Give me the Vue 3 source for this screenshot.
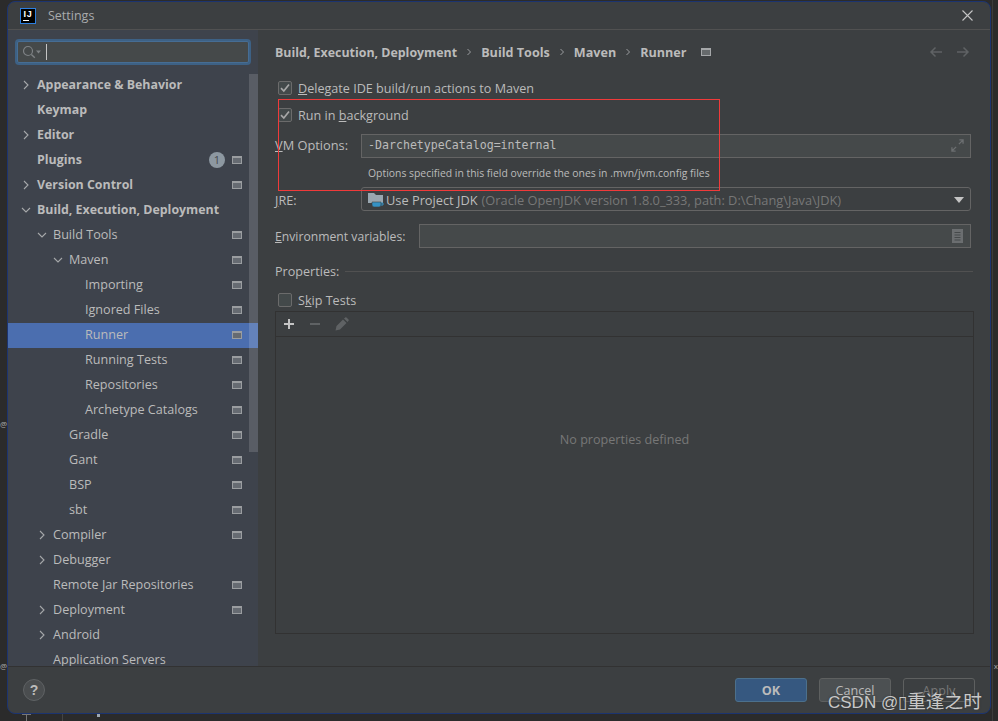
<script setup>
const tree = [
  { label: 'Appearance & Behavior', level: 0, bold: true, arrow: 'right' },
  { label: 'Keymap', level: 0, bold: true },
  { label: 'Editor', level: 0, bold: true, arrow: 'right' },
  { label: 'Plugins', level: 0, bold: true, badge: '1', gear: true },
  { label: 'Version Control', level: 0, bold: true, arrow: 'right', gear: true },
  { label: 'Build, Execution, Deployment', level: 0, bold: true, arrow: 'down' },
  { label: 'Build Tools', level: 1, arrow: 'down', gear: true },
  { label: 'Maven', level: 2, arrow: 'down', gear: true },
  { label: 'Importing', level: 3, gear: true },
  { label: 'Ignored Files', level: 3, gear: true },
  { label: 'Runner', level: 3, gear: true, selected: true },
  { label: 'Running Tests', level: 3, gear: true },
  { label: 'Repositories', level: 3, gear: true },
  { label: 'Archetype Catalogs', level: 3, gear: true },
  { label: 'Gradle', level: 2, gear: true },
  { label: 'Gant', level: 2, gear: true },
  { label: 'BSP', level: 2, gear: true },
  { label: 'sbt', level: 2, gear: true },
  { label: 'Compiler', level: 1, arrow: 'right', gear: true },
  { label: 'Debugger', level: 1, arrow: 'right' },
  { label: 'Remote Jar Repositories', level: 1, gear: true },
  { label: 'Deployment', level: 1, arrow: 'right', gear: true },
  { label: 'Android', level: 1, arrow: 'right' },
  { label: 'Application Servers', level: 1 }
]
const crumbs = ['Build Tools', 'Maven', 'Runner']
</script>

<template>
  <div class="desktop">
    <div class="dialog">
      <header class="titlebar">
        <div class="logo"><span class="logo-text">IJ</span><span class="logo-bar"></span></div>
        <span class="title">Settings</span>
        <svg class="close" viewBox="0 0 11 11" width="11" height="11">
          <path d="M.5.500l10 10M10.500.500l-10 10" stroke="#c4c4c4" stroke-width="1.100" fill="none" />
        </svg>
      </header>

      <div class="body">
        <aside class="sidebar">
          <div class="search">
            <svg viewBox="0 0 20 14" width="20" height="14">
              <circle cx="6" cy="6" r="4.500" fill="none" stroke="#7d8184" stroke-width="1.200" />
              <path d="M9.400 9.400l3.400 3.400" stroke="#7d8184" stroke-width="1.400" />
              <path d="M14 5.500h5l-2.500 3z" fill="#7d8184" />
            </svg>
            <span class="caret"></span>
          </div>
          <div class="tree">
            <div v-for="item in tree" :key="item.label" class="row" :class="{ selected: item.selected, bold: item.bold }"
              :style="{ paddingLeft: 13 + item.level * 16 + 'px' }">
              <span class="arrow">
                <svg v-if="item.arrow === 'right'" viewBox="0 0 10 10" width="10" height="10">
                  <path d="M3 1l4 4-4 4" fill="none" stroke="#a5a7a9" stroke-width="1.100" />
                </svg>
                <svg v-if="item.arrow === 'down'" viewBox="0 0 10 10" width="10" height="10">
                  <path d="M1 3l4 4 4-4" fill="none" stroke="#a5a7a9" stroke-width="1.100" />
                </svg>
              </span>
              <span class="row-label">{{ item.label }}</span>
              <span v-if="item.badge" class="badge">{{ item.badge }}</span>
              <svg v-if="item.gear" class="gear" viewBox="0 0 10 8" width="10" height="8">
                <rect x="0.500" y="0.500" width="9" height="7" fill="#666b72" stroke="#9a9da0" />
                <path d="M1 1.500h8" stroke="#9a9da0" />
              </svg>
            </div>
            <div class="scrollbar"></div>
          </div>
        </aside>

        <main class="panel">
          <div class="crumbs">
            <span>Build, Execution, Deployment</span>
            <template v-for="c in crumbs" :key="c">
              <svg viewBox="0 0 6 8" width="6" height="8"><path d="M1.500 1l3 3-3 3" fill="none" stroke="#9a9da0" /></svg>
              <span class="crumb">{{ c }}</span>
            </template>
            <svg class="crumb-gear" viewBox="0 0 10 8" width="10" height="8">
              <rect x="0.500" y="0.500" width="9" height="7" fill="#666a6c" stroke="#a5a7a9" />
              <path d="M1 1.500h8" stroke="#a5a7a9" />
            </svg>
            <div class="nav">
              <svg viewBox="0 0 14 12" width="14" height="12"><path d="M13 6H2M6.500 1.500L2 6l4.500 4.500" fill="none" stroke="#5f6264" stroke-width="1.500" /></svg>
              <svg viewBox="0 0 14 12" width="14" height="12"><path d="M1 6h11M7.500 1.500L12 6l-4.500 4.500" fill="none" stroke="#5f6264" stroke-width="1.500" /></svg>
            </div>
          </div>

          <label class="check first">
            <span class="box"><svg viewBox="0 0 14 14" width="14" height="14"><path d="M3 7.200l2.800 2.800L11 3.500" fill="none" stroke="#a7a7a7" stroke-width="1.700" /></svg></span>
            <span><u>D</u>elegate IDE build/run actions to Maven</span>
          </label>
          <label class="check second">
            <span class="box"><svg viewBox="0 0 14 14" width="14" height="14"><path d="M3 7.200l2.800 2.800L11 3.500" fill="none" stroke="#a7a7a7" stroke-width="1.700" /></svg></span>
            <span>Run in <u>b</u>ackground</span>
          </label>

          <div class="form-row vm">
            <span class="form-label"><u>V</u>M Options:</span>
            <div class="field mono">
              <span>-DarchetypeCatalog=internal</span>
              <svg class="expand" viewBox="0 0 14 14" width="13" height="13">
                <path d="M8.500 5.500L13 1M9 1h4v4M5.500 8.500L1 13M1 9v4h4" fill="none" stroke="#6b6e70" stroke-width="1.400" />
              </svg>
            </div>
          </div>
          <p class="hint">Options specified in this field override the ones in .mvn/jvm.config files</p>

          <div class="form-row jre">
            <span class="form-label"><u>J</u>RE:</span>
            <div class="combo">
              <svg class="jdk" viewBox="0 0 16 16" width="16" height="16">
                <path d="M0 1h6l2 2h7v8H0z" fill="#9aa7b0" />
                <path d="M4 10h9v3a2 2 0 0 1-2 2H6a2 2 0 0 1-2-2z" fill="#3592c4" stroke="#3c3f41" stroke-width=".6" />
                <path d="M13 11h2v2h-2" fill="none" stroke="#3592c4" />
              </svg>
              <span class="use">Use Project JDK</span>
              <span class="dim">(Oracle OpenJDK version 1.8.0_333, path: D:\Chang\Java\JDK)</span>
              <svg class="caret-down" viewBox="0 0 10 6" width="10" height="6"><path d="M0 0h10L5 6z" fill="#c4c4c4" /></svg>
            </div>
          </div>

          <div class="form-row env">
            <span class="form-label"><u>E</u>nvironment variables:</span>
            <div class="field">
              <svg class="doc" viewBox="0 0 11 14" width="11" height="14">
                <rect width="11" height="14" fill="#6b6e70" />
                <path d="M2.500 3.500h6M2.500 6h6M2.500 8.500h6M2.500 11h6" stroke="#45494a" />
              </svg>
            </div>
          </div>

          <div class="props-title"><span>Properties:</span><i></i></div>

          <label class="check skip">
            <span class="box"></span>
            <span>S<u>k</u>ip Tests</span>
          </label>

          <section class="table">
            <div class="toolbar">
              <svg viewBox="0 0 12 12" width="12" height="12"><path d="M6 1v10M1 6h10" stroke="#c4c4c4" stroke-width="2" /></svg>
              <svg viewBox="0 0 12 12" width="12" height="12"><path d="M1 6h10" stroke="#5f6264" stroke-width="2" /></svg>
              <svg viewBox="0 0 14 14" width="14" height="14">
                <path d="M.5 13.500l1-4.500 6.500-6.500 3.500 3.500L5 12.500zM9 1.500L10.200.5a1 1 0 0 1 1.300 0l2 2a1 1 0 0 1 0 1.300L12.500 5z" fill="#5f6264" />
              </svg>
            </div>
            <div class="empty">No properties defined</div>
          </section>
        </main>
      </div>

      <footer class="footer">
        <span class="help">?</span>
        <div class="buttons">
          <button class="btn ok">OK</button>
          <button class="btn cancel">Cancel</button>
          <button class="btn apply">Apply</button>
        </div>
      </footer>
    </div>

    <div class="annotation"></div>
    <span class="watermark">CSDN @▯<span class="watermark-cjk">重逢之时</span></span>
    <span class="peek peek-a">@</span>
    <span class="peek peek-b">@</span>
    <span class="peek peek-c">x</span>
    <div class="edge"></div>
    <div class="behind behind-t"></div>
    <div class="behind behind-line"></div>
    <div class="behind behind-mark"></div>
  </div>
</template>

<style>
html, body { margin: 0; background: #2b2b2b; overflow: hidden; }
</style>

<style scoped>
.desktop {
  position: relative;
  width: 998px;
  height: 721px;
  box-sizing: border-box;
  padding: 1px 7px 7px 7px;
  background: #2b2b2b;
  font-family: "Open Sans", "Noto Sans", sans-serif;
  font-size: 12.6px;
  color: #bbbbbb;
  overflow: hidden;
}

.dialog {
  height: 100%;
  box-sizing: border-box;
  display: flex;
  flex-direction: column;
  background: #3c3f41;
  border: 1px solid #1c3470;
  border-radius: 8px;
  overflow: hidden;
}

.titlebar {
  flex: none;
  height: 28px;
  box-sizing: border-box;
  display: flex;
  align-items: center;
  padding: 0 12px 0 12px;
  border-bottom: 1px solid #515151;
}

.logo {
  width: 16px;
  height: 16px;
  box-sizing: border-box;
  background: #000;
  border: 1px solid #2d7fe0;
  position: relative;
  display: flex;
  justify-content: center;
}

.logo-text {
  font-family: "Liberation Sans", sans-serif;
  font-weight: 700;
  font-size: 9px;
  line-height: 10px;
  color: #fff;
  letter-spacing: 0.8px;
}

.logo-bar {
  position: absolute;
  left: 2px;
  bottom: 2px;
  width: 6px;
  height: 1px;
  background: #fff;
}

.title {
  margin-left: 12px;
  font-size: 12.5px;
  color: #a9abad;
}

.close { margin-left: auto; margin-right: 5px; }

.body {
  flex: 1;
  min-height: 0;
  display: flex;
}

.sidebar {
  flex: none;
  width: 250px;
  background: #3e434c;
  display: flex;
  flex-direction: column;
  overflow: hidden;
}

.search {
  flex: none;
  width: 232px;
  height: 22px;
  margin: 11px 0 10px 9px;
  padding: 0 0 0 4px;
  box-sizing: border-box;
  display: flex;
  align-items: center;
  gap: 4px;
  background: #45494a;
  border: 1px solid #466d94;
  border-radius: 2px;
  box-shadow: 0 0 0 2px #3d6185;
}

.caret { width: 1px; height: 16px; background: #c4c4c4; }

.tree { position: relative; flex: 1; min-height: 0; overflow: hidden; }

.row {
  height: 25px;
  display: flex;
  align-items: center;
  box-sizing: border-box;
  padding-right: 16px;
  padding-bottom: 2px;
  white-space: nowrap;
}

.row.bold { font-weight: 700; font-size: 12.4px; }

.row.selected { background: #4b6eaf; }

.arrow {
  flex: none;
  width: 16px;
  height: 10px;
  display: flex;
}

.row-label { flex: none; }

.badge {
  margin-left: auto;
  width: 16px;
  height: 16px;
  border-radius: 50%;
  background: #8d98a1;
  color: #45494f;
  font-size: 11px;
  font-weight: 400;
  line-height: 16px;
  text-align: center;
}

.gear { flex: none; margin-left: auto; }

.badge + .gear { margin-left: 7px; }

.scrollbar {
  position: absolute;
  top: 1px;
  right: 0;
  width: 9px;
  height: 378px;
  background: rgba(255, 255, 255, 0.14);
}

.panel {
  flex: 1;
  min-width: 0;
  padding: 0 16px 0 17px;
  display: flex;
  flex-direction: column;
}

.crumbs {
  flex: none;
  height: 16px;
  margin-top: 14px;
  display: flex;
  align-items: center;
  gap: 9px;
  font-weight: 700;
  font-size: 12.4px;
  white-space: nowrap;
}

.crumb { font-size: 12.6px; }

.crumb-gear { margin-left: 5px; }

.nav {
  margin-left: auto;
  margin-right: 4px;
  display: flex;
  gap: 13px;
}

.check {
  display: flex;
  align-items: center;
  gap: 6px;
  height: 16px;
  margin-left: 3px;
}

.first { margin-top: 20px; }
.second { margin-top: 11px; }

.box {
  flex: none;
  width: 14px;
  height: 14px;
  box-sizing: border-box;
  background: #43494a;
  border: 1px solid #6b6b6b;
  border-radius: 2px;
  display: flex;
  align-items: center;
  justify-content: center;
}

.box svg { flex: none; }

.form-row {
  display: flex;
  align-items: center;
  height: 24px;
  margin-right: 3px;
}

.form-label { flex: none; }

.vm { margin-top: 11px; }
.vm .form-label { width: 86px; padding-bottom: 2px; font-size: 12.8px; }

.field {
  flex: 1;
  height: 24px;
  box-sizing: border-box;
  padding: 0 6px;
  display: flex;
  align-items: center;
  background: #45494a;
  border: 1px solid #646464;
}

.mono {
  font-family: "DejaVu Sans Mono", monospace;
  font-size: 11.6px;
  color: #bbbbbb;
  padding-bottom: 2px;
}

.expand { margin-left: auto; }

.hint {
  margin: 8px 0 0 93px;
  height: 15px;
  line-height: 15px;
  font-size: 10.4px;
  white-space: nowrap;
}

.jre { margin-top: 6px; }
.jre .form-label { width: 86px; padding-top: 2px; }

.combo {
  flex: 1;
  height: 24px;
  box-sizing: border-box;
  padding: 1px 6px 0;
  display: flex;
  align-items: center;
  white-space: nowrap;
  font-size: 12.8px;
  background: #3c3f41;
  border: 1px solid #646464;
  border-radius: 3px;
}

.jdk { flex: none; margin-right: 2px; }

.use { margin-right: 4px; }

.dim { color: #777777; }

.caret-down { margin-left: auto; }

.env { margin-top: 13px; }
.env .form-label { width: 144px; font-size: 12.2px; }

.doc { margin-left: auto; margin-right: 1px; }

.props-title {
  margin-top: 14px;
  margin-right: 1px;
  height: 18px;
  display: flex;
  align-items: center;
  gap: 6px;
}

.props-title i {
  flex: 1;
  height: 1px;
  background: #515151;
}

.skip { margin-top: 12px; }

.table {
  flex: 1;
  margin: 3px 0 32px;
  display: flex;
  flex-direction: column;
  border: 1px solid #323232;
}

.toolbar {
  flex: none;
  height: 25px;
  box-sizing: border-box;
  padding: 0 0 0 7px;
  display: flex;
  align-items: center;
  gap: 14px;
  border-bottom: 1px solid #323232;
}

.empty {
  flex: 1;
  padding-bottom: 92px;
  display: flex;
  align-items: center;
  justify-content: center;
  color: #777777;
}

.footer {
  flex: none;
  height: 47px;
  box-sizing: border-box;
  padding: 0 15px 0 15px;
  display: flex;
  align-items: center;
  justify-content: space-between;
  border-top: 1px solid #323232;
}

.help {
  width: 22px;
  height: 22px;
  border-radius: 50%;
  box-sizing: border-box;
  background: #4a4d4f;
  border: 1px solid #5f6264;
  font-family: "Liberation Sans", sans-serif;
  font-weight: 700;
  font-size: 14px;
  line-height: 20px;
  text-align: center;
  color: #bbbbbb;
}

.buttons { display: flex; gap: 12px; margin-top: -1px; }

.btn {
  width: 72px;
  height: 24px;
  padding: 1px 0 0;
  font: inherit;
  border-radius: 3px;
  border: 1px solid #5e6060;
  background: #4c5052;
  color: #bbbbbb;
}

.ok {
  background: #365880;
  border-color: #4c708c;
  font-weight: 700;
}

.apply {
  background: transparent;
  border-color: #5e6060;
  color: #777777;
}

.annotation {
  position: absolute;
  left: 278px;
  top: 99px;
  width: 442px;
  height: 92px;
  box-sizing: border-box;
  border: 1px solid #f03a3a;
}

.watermark {
  position: absolute;
  left: 828px;
  top: 691px;
  font-family: "Liberation Sans", "Noto Sans CJK SC", sans-serif;
  font-size: 17px;
  line-height: 22px;
  color: #c8c8c8;
  text-shadow: 0 0 2px #333;
  white-space: nowrap;
}

.watermark-cjk { font-size: 18.700px; }

.peek {
  position: absolute;
  font-size: 8px;
  line-height: 14px;
  color: #a9a9a9;
}

.peek-a { left: 0; top: 417px; }
.peek-b { left: 0; top: 659px; }
.peek-c { right: 0; top: 659px; }

.edge {
  position: absolute;
  left: 992px;
  top: 0;
  bottom: 0;
  width: 1px;
  background: #3c3c3c;
}

.behind { position: absolute; }

.behind-t {
  left: 22px;
  top: 714px;
  width: 9px;
  height: 7px;
  box-sizing: border-box;
  border-top: 1px solid #777;
  background: linear-gradient(#777, #777) center / 1px 100% no-repeat;
}

.behind-line {
  left: 62px;
  top: 714px;
  width: 1px;
  height: 7px;
  background: #444;
}

.behind-mark {
  left: 97px;
  top: 714px;
  width: 3px;
  height: 3px;
  background: #a0a8b0;
}
</style>
